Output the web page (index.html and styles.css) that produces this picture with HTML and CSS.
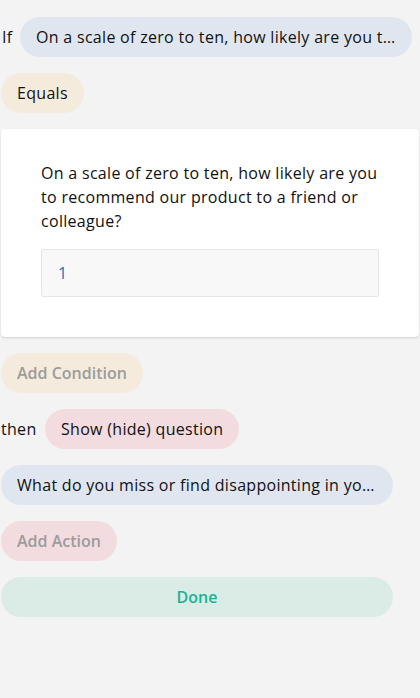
FILE: index.html
```html
<!DOCTYPE html>
<html>
<head>
<meta charset="utf-8">
<link rel="stylesheet" href="styles.css">
</head>
<body>
<div class="page">
  <div class="row">
    <span class="label label-if">If</span>
    <div class="pill pill-blue pill-q1"><span class="ellip">On a scale of zero to ten, how likely are you to recommend our product to a friend or colleague?</span></div>
  </div>
  <div class="row">
    <div class="pill pill-orange">Equals</div>
  </div>
  <div class="card">
    <div class="card-title">On a scale of zero to ten, how likely are you to recommend our product to a friend or colleague?</div>
    <div class="input">1</div>
  </div>
  <div class="row">
    <div class="pill pill-orange pill-muted">Add Condition</div>
  </div>
  <div class="row">
    <span class="label label-then">then</span>
    <div class="pill pill-pink">Show (hide) question</div>
  </div>
  <div class="row">
    <div class="pill pill-blue pill-q2"><span class="ellip">What do you miss or find disappointing in your experience with our products?</span></div>
  </div>
  <div class="row">
    <div class="pill pill-pink pill-muted">Add Action</div>
  </div>
  <div class="row">
    <div class="pill pill-green">Done</div>
  </div>
</div>
</body>
</html>
```
FILE: styles.css
```css
html, body {
  margin: 0;
  padding: 0;
  background: #f3f3f3;
}
body {
  font-family: "Open Sans", "Noto Sans", sans-serif;
  font-size: 16px;
  line-height: 24px;
  color: #111111;
  letter-spacing: 0.3px;
}
.page {
  padding: 17px 1px 0 1px;
  display: flex;
  flex-direction: column;
  gap: 16px;
}
.row {
  display: flex;
  align-items: center;
  height: 40px;
}
.label {
  flex: none;
}
.label-if {
  margin-left: 1px;
  width: 18px;
}
.label-then {
  width: 44px;
}
.pill {
  height: 40px;
  box-sizing: border-box;
  padding: 8px 16px;
  border-radius: 20px;
  white-space: nowrap;
  flex: none;
}
.pill-blue { background: #e0e6f0; }
.pill-orange { background: #f5ebdd; }
.pill-pink { background: #f3dce0; }
.pill-green {
  background: #dbece7;
  color: #19b394;
  width: 392px;
  text-align: center;
  font-weight: 600;
  letter-spacing: 0;
}
.pill-muted {
  color: #9b9b9b;
  font-weight: 600;
  letter-spacing: 0;
}
.pill-q1 { width: 392px; }
.pill-q2 { width: 392px; }
.ellip {
  display: block;
  overflow: hidden;
  text-overflow: ellipsis;
}
.card {
  background: #ffffff;
  border-radius: 4px;
  box-shadow: 0 1px 2px rgba(0,0,0,0.15);
  padding: 32px 40px 40px 40px;
}
.card-title {
  margin-bottom: 16px;
}
.input {
  background: #f8f8f8;
  border: 1px solid #e6e6e6;
  border-radius: 2px;
  height: 48px;
  box-sizing: border-box;
  padding: 11px 16px;
  color: #1c6fb5;
}
```
